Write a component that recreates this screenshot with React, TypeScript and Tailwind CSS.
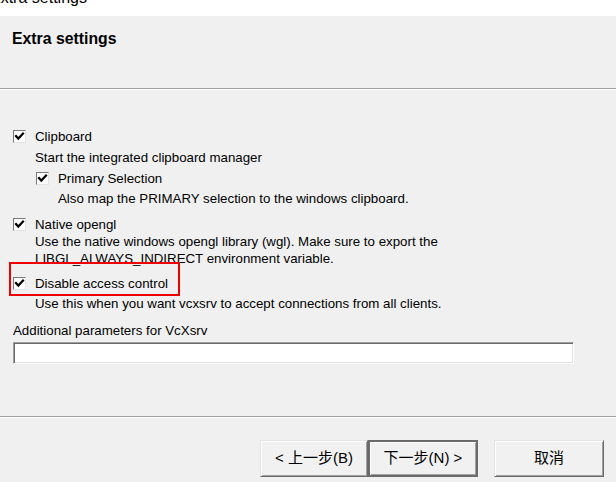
import React from 'react';

// --- classic sunken checkbox ---
const Check: React.FC = () => (
  <span className="w-[13px] h-[13px] shrink-0 bg-white border border-t-[#7a7a7a] border-l-[#7a7a7a] border-r-[#e3e3e3] border-b-[#e3e3e3] flex items-center justify-center">
    <svg width="11" height="11" viewBox="0 0 11 11" fill="none">
      <polyline points="2,5 4.3,7.6 9,2.6" stroke="#000" strokeWidth="2.2" strokeLinecap="square" strokeLinejoin="miter" />
    </svg>
  </span>
);

const Option: React.FC<{ label: string; className?: string }> = ({ label, className }) => (
  <div className={`flex items-center h-[17px] ${className || ''}`}>
    <Check />
    <span className="ml-[9px]">{label}</span>
  </div>
);

interface BtnProps {
  label: string;
  primary?: boolean;
  className?: string;
}

const WizardButton: React.FC<BtnProps> = ({ label, primary, className }) => (
  <button
    className={`h-[37px] flex items-center justify-center text-[15px] text-black bg-[#f1f1f1] ${
      primary
        ? 'border-2 border-[#6b6b6b] shadow-[inset_1px_1px_0_#ffffff,inset_-1px_-1px_0_#a0a0a0]'
        : 'border border-t-[#e3e3e3] border-l-[#e3e3e3] border-r-[#6b6b6b] border-b-[#6b6b6b] shadow-[inset_1px_1px_0_#ffffff,inset_-1px_-1px_0_#a0a0a0]'
    } ${className || ''}`}
  >
    {label}
  </button>
);

export default function App() {
  return (
    <div className="relative w-[616px] h-[482px] overflow-hidden bg-[#f0f0f0] text-black font-['Liberation_Sans','Noto_Sans_CJK_SC',sans-serif] text-[13.3px]">
      {/* window caption, cut off at the top */}
      <div className="h-[16px] bg-white overflow-hidden">
        <div className="ml-[-10px] mt-[-10.5px] text-[16px] leading-[16px]">Extra settings</div>
      </div>

      {/* header */}
      <div className="h-[72px] pl-[12px] pt-[14px]">
        <div className="text-[15.8px] leading-[18px] font-bold">Extra settings</div>
      </div>
      <div className="h-px bg-[#a0a0a0]" />
      <div className="h-px bg-white" />

      {/* body */}
      <div className="h-[326px] flex flex-col pl-[13px] pt-[38px] leading-[17px]">
        <Option label="Clipboard" />
        <div className="pl-[22px] mt-[4px]">Start the integrated clipboard manager</div>
        <Option label="Primary Selection" className="pl-[23px] mt-[4px]" />
        <div className="pl-[45px] mt-[3px]">Also map the PRIMARY selection to the windows clipboard.</div>

        <Option label="Native opengl" className="mt-[9px]" />
        <div className="pl-[22px] mt-[1px] leading-[16.5px]">
          Use the native windows opengl library (wgl). Make sure to export the
          <br />
          LIBGL_ALWAYS_INDIRECT environment variable.
        </div>

        <Option label="Disable access control" className="mt-[8px]" />
        <div className="pl-[22px] mt-[3px]">Use this when you want vcxsrv to accept connections from all clients.</div>

        <div className="mt-[10px]">Additional parameters for VcXsrv</div>
        <div className="mt-[3px] w-[561px] h-[22px] bg-white border border-t-[#a0a0a0] border-l-[#a0a0a0] border-r-[#ffffff] border-b-[#ffffff] shadow-[inset_1px_1px_0_#696969,inset_-1px_-1px_0_#e3e3e3]" />
      </div>

      <div className="h-px bg-[#a0a0a0]" />
      <div className="h-px bg-white" />

      {/* footer buttons */}
      <div className="flex pl-[260px] pt-[22px]">
        <WizardButton label="< 上一步(B)" className="w-[108px]" />
        <WizardButton label="下一步(N) >" primary className="w-[110px]" />
        <WizardButton label="取消" className="w-[110px] ml-[16px]" />
      </div>

      {/* red highlight frame */}
      <div className="absolute left-[9px] top-[262px] w-[171px] h-[34px] border-2 border-[#ee0000] pointer-events-none" />
    </div>
  );
}
